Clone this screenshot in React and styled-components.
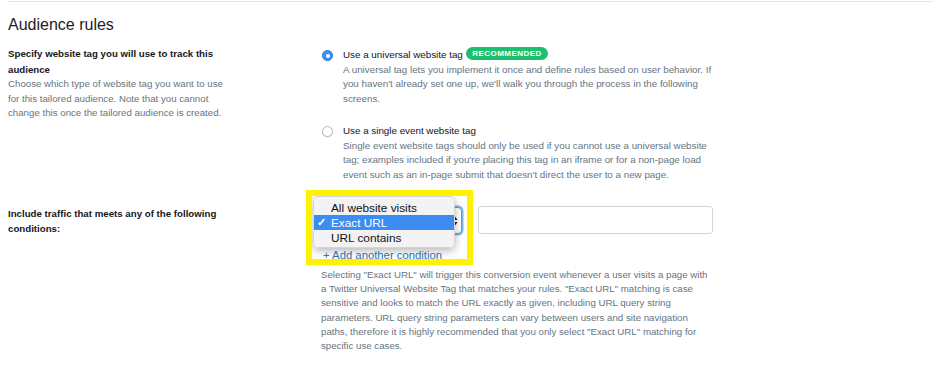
import React from "react";
import styled, { createGlobalStyle } from "styled-components";

const Global = createGlobalStyle`
  html, body { margin: 0; padding: 0; background: #fff; }
  body { font-family: "Liberation Sans", Arial, sans-serif; color: #14171a; }
`;

const Page = styled.div`
  margin: 1px 3px 0 8px;
  border-top: 1px solid #e1e8ed;
  display: flex;
  flex-direction: column;
`;

const Heading = styled.h2`
  margin: 13px 0 0;
  font-family: "Liberation Sans", Arial, sans-serif;
  font-weight: 400;
  font-size: 16px;
  line-height: 20px;
  color: #1c2126;
`;

const Section = styled.section`
  display: grid;
  grid-template-columns: 313px 1fr;
  margin-top: ${(p) => p.$gap}px;
`;

const Side = styled.div`
  font-size: 9.7px;
  line-height: 14.6px;
`;

const SideTitle = styled.div`
  font-weight: 700;
  color: #14171a;
  line-height: ${(p) => (p.$tall ? "15px" : "15.6px")};
`;

const Hint = styled.div`
  color: #66757f;
`;

const Line = styled.span`
  display: block;
  white-space: nowrap;
`;

const Options = styled.div`
  display: flex;
  flex-direction: column;
  gap: 16.4px;
  padding-top: 0.5px;
`;

const Option = styled.div`
  display: flex;
  align-items: flex-start;
  gap: 10px;
`;

const Radio = styled.span`
  flex: none;
  box-sizing: border-box;
  width: 11px;
  height: 11px;
  margin: 3.5px 0 0 1px;
  border-radius: 50%;
  background: ${(p) => (p.$on ? "#3b8ff5" : "#fff")};
  border: 1px solid ${(p) => (p.$on ? "#2f7fe6" : "#b9b9b9")};
  box-shadow: 0 0.5px 1px rgba(0, 0, 0, 0.12);
  display: flex;
  align-items: center;
  justify-content: center;
  &::after {
    content: "";
    display: ${(p) => (p.$on ? "block" : "none")};
    width: 4px;
    height: 4px;
    border-radius: 50%;
    background: #fff;
  }
`;

const OptionBody = styled.div`
  display: flex;
  flex-direction: column;
  gap: 1px;
  font-size: 9.8px;
`;

const OptionTitle = styled.div`
  display: flex;
  align-items: center;
  gap: 3px;
  line-height: 15px;
  color: #111417;
  white-space: nowrap;
`;

const Badge = styled.span`
  display: inline-flex;
  align-items: center;
  height: 13px;
  padding: 0 6.5px;
  border-radius: 7px;
  background: #1cbf6e;
  color: #fff;
  font-weight: 700;
  font-size: 8px;
  letter-spacing: 0.45px;
  margin-top: -1px;
`;

const Desc = styled.div`
  color: #66757f;
  line-height: 14.6px;
`;

const Conditions = styled.div`
  display: flex;
  flex-direction: column;
`;

const ConditionRow = styled.div`
  position: relative;
  display: flex;
  align-items: center;
  gap: 16px;
  height: 28px;
`;

const SelectBox = styled.div`
  box-sizing: border-box;
  width: 141px;
  height: 27px;
  margin-top: 1px;
  border: 1px solid #5a9be0;
  border-radius: 4px;
  box-shadow: 0 0 0 1.5px rgba(90, 155, 224, 0.75);
  background: #fff;
  display: flex;
  align-items: center;
  justify-content: flex-end;
  padding-right: 3px;
`;

const UrlInput = styled.div`
  box-sizing: border-box;
  width: 235px;
  height: 28px;
  border: 1px solid #ccd6dd;
  border-radius: 3px;
  background: #fff;
`;

const Menu = styled.div`
  position: absolute;
  left: -8px;
  top: -10px;
  width: 142px;
  box-sizing: border-box;
  padding: 3px 0 2px;
  background: rgba(243, 243, 243, 0.98);
  border: 1px solid rgba(0, 0, 0, 0.12);
  border-radius: 5px;
  box-shadow: 0 3px 9px rgba(0, 0, 0, 0.28);
  z-index: 2;
`;

const MenuItem = styled.div`
  display: flex;
  align-items: center;
  height: 15px;
  padding-left: 3px;
  font-size: 11.8px;
  color: ${(p) => (p.$active ? "#fff" : "#111")};
  background: ${(p) => (p.$active ? "#3d8cf2" : "transparent")};
`;

const Check = styled.span`
  width: 14px;
  font-size: 11px;
  font-weight: 700;
`;

const Highlight = styled.div`
  position: absolute;
  left: -15px;
  top: -16px;
  width: 167px;
  height: 75px;
  box-sizing: border-box;
  border: 6px solid #fff200;
  z-index: 3;
  pointer-events: none;
`;

const AddLink = styled.a`
  margin-top: 13.5px;
  font-size: 11.3px;
  line-height: 14px;
  color: #2b7bb9;
  text-decoration: none;
  padding-left: 2px;
`;

const Note = styled.p`
  margin: 6px 0 0;
  font-size: 9.7px;
  line-height: 14.2px;
  color: #66757f;
`;

const Lines = ({ items }) => items.map((t, i) => <Line key={i}>{t}</Line>);

const Arrows = () => (
  <svg width="6" height="10" viewBox="0 0 6 10">
    <path d="M3 0.5 L5.6 4 H0.4 Z" fill="#222" />
    <path d="M3 9.5 L5.6 6 H0.4 Z" fill="#222" />
  </svg>
);

export default function App() {
  return (
    <>
      <Global />
      <Page>
        <Heading>Audience rules</Heading>
        <Section $gap={11}>
          <Side>
            <SideTitle>
              <Lines items={["Specify website tag you will use to track this", "audience"]} />
            </SideTitle>
            <Hint>
              <Lines
                items={[
                  "Choose which type of website tag you want to use",
                  "for this tailored audience. Note that you cannot",
                  "change this once the tailored audience is created.",
                ]}
              />
            </Hint>
          </Side>
          <Options>
            <Option>
              <Radio $on />
              <OptionBody>
                <OptionTitle>
                  Use a universal website tag <Badge>RECOMMENDED</Badge>
                </OptionTitle>
                <Desc>
                  <Lines
                    items={[
                      "A universal tag lets you implement it once and define rules based on user behavior. If",
                      "you haven't already set one up, we'll walk you through the process in the following",
                      "screens.",
                    ]}
                  />
                </Desc>
              </OptionBody>
            </Option>
            <Option>
              <Radio />
              <OptionBody>
                <OptionTitle>Use a single event website tag</OptionTitle>
                <Desc>
                  <Lines
                    items={[
                      "Single event website tags should only be used if you cannot use a universal website",
                      "tag; examples included if you're placing this tag in an iframe or for a non-page load",
                      "event such as an in-page submit that doesn't direct the user to a new page.",
                    ]}
                  />
                </Desc>
              </OptionBody>
            </Option>
          </Options>
        </Section>
        <Section $gap={24}>
          <Side>
            <SideTitle $tall>
              <Lines items={["Include traffic that meets any of the following", "conditions:"]} />
            </SideTitle>
          </Side>
          <Conditions>
            <ConditionRow>
              <SelectBox>
                <Arrows />
              </SelectBox>
              <UrlInput />
              <Menu>
                <MenuItem>
                  <Check />
                  All website visits
                </MenuItem>
                <MenuItem $active>
                  <Check>✓</Check>
                  Exact URL
                </MenuItem>
                <MenuItem>
                  <Check />
                  URL contains
                </MenuItem>
              </Menu>
              <Highlight />
            </ConditionRow>
            <AddLink href="#">+ Add another condition</AddLink>
            <Note>
              <Lines
                items={[
                  'Selecting "Exact URL" will trigger this conversion event whenever a user visits a page with',
                  'a Twitter Universal Website Tag that matches your rules. "Exact URL" matching is case',
                  "sensitive and looks to match the URL exactly as given, including URL query string",
                  "parameters. URL query string parameters can vary between users and site navigation",
                  'paths, therefore it is highly recommended that you only select "Exact URL" matching for',
                  "specific use cases.",
                ]}
              />
            </Note>
          </Conditions>
        </Section>
      </Page>
    </>
  );
}
